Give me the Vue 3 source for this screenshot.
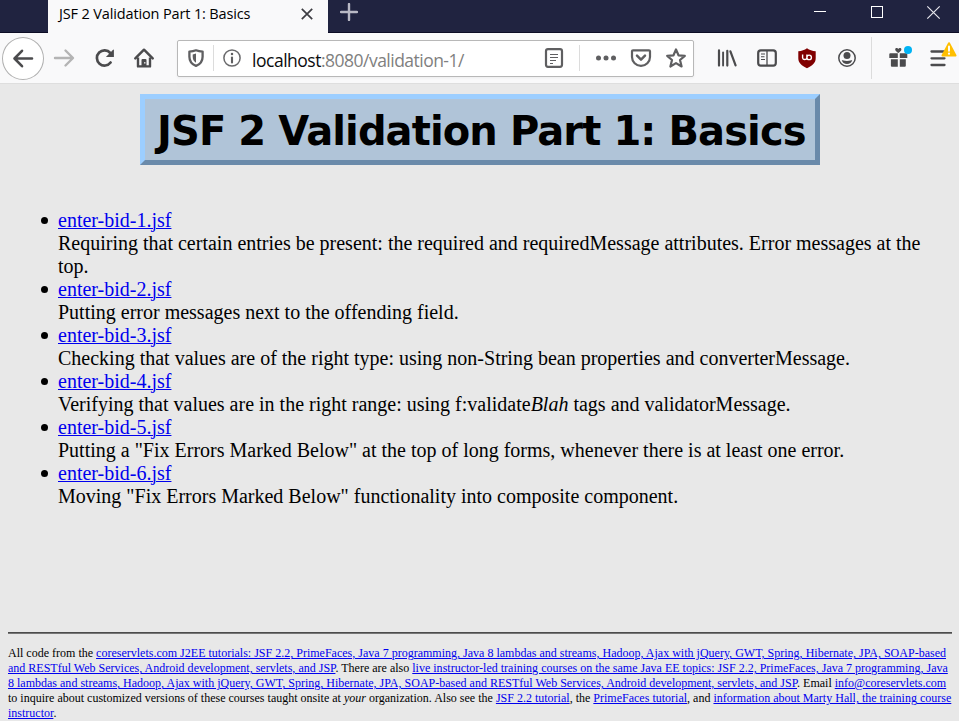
<script setup>
const lessons = [
  { file: 'enter-bid-1.jsf', lines: [['Requiring that certain entries be present: the required and requiredMessage attributes. Error messages at the'], ['top.']] },
  { file: 'enter-bid-2.jsf', lines: [['Putting error messages next to the offending field.']] },
  { file: 'enter-bid-3.jsf', lines: [['Checking that values are of the right type: using non-String bean properties and converterMessage.']] },
  { file: 'enter-bid-4.jsf', lines: [['Verifying that values are in the right range: using f:validate', 'Blah', ' tags and validatorMessage.']] },
  { file: 'enter-bid-5.jsf', lines: [['Putting a "Fix Errors Marked Below" at the top of long forms, whenever there is at least one error.']] },
  { file: 'enter-bid-6.jsf', lines: [['Moving "Fix Errors Marked Below" functionality into composite component.']] },
]
</script>

<template>
  <div class="window">
    <header class="tabs">
      <div class="tab">
        <span class="tab-title">JSF 2 Validation Part 1: Basics</span>
        <svg class="tab-close" width="12" height="12" viewBox="0 0 12 12"><path d="M.8.8l10.4 10.4M11.2.8L.8 11.2" stroke="#3d3d42" stroke-width="1.7" /></svg>
      </div>
      <svg class="plus" width="18" height="18" viewBox="0 0 18 18"><path d="M9 1v16M1 9h16" stroke="#b9b9c5" stroke-width="2.400" stroke-linecap="round" /></svg>
      <svg class="controls" width="128" height="16" viewBox="0 0 128 16" fill="none" stroke="#fff">
        <path d="M0 7.5h12" />
        <rect x="57.500" y="2.500" width="11" height="11" />
        <path d="M113.300 2.300l12.400 12.400M125.700 2.300l-12.400 12.400" stroke-width="1.200" stroke="#e6e6ec" />
      </svg>
    </header>

    <nav class="toolbar">
      <div class="back">
        <svg width="24" height="24" viewBox="0 0 24 24" fill="none" stroke="#4b4b4d" stroke-width="2.600" stroke-linecap="round" stroke-linejoin="round"><path d="M21 12.500H4M11 4.800L3.500 12.500l7.500 7.700" /></svg>
      </div>
      <svg class="icon forward" viewBox="0 0 24 24" fill="none" stroke="#b4b4b4" stroke-width="2.400" stroke-linecap="round" stroke-linejoin="round"><path d="M3 12h17M13.500 4.500L21 12l-7.500 7.500" /></svg>
      <svg class="icon reload" viewBox="0 0 24 24" fill="none" stroke="#4b4b4d"><path d="M17.600 16.500A7.600 7.600 0 1 1 17.300 7" stroke-width="2.700" stroke-linecap="round" /><path d="M20.900 3.400v7.700h-8l3-3 1.600-1.500 2.300-2.600z" fill="#4b4b4d" stroke="none" /></svg>
      <svg class="icon home" viewBox="0 0 24 24"><path d="M3.300 12.300L12 3.700l8.700 8.600" fill="none" stroke="#4b4b4d" stroke-width="2.500" stroke-linecap="round" stroke-linejoin="round" /><path d="M6 11.500v8.900h12v-8.900" fill="none" stroke="#4b4b4d" stroke-width="2.400" stroke-linejoin="round" /><path d="M9.500 21v-7a1 1 0 0 1 1-1h3a1 1 0 0 1 1 1v7z" fill="#4b4b4d" /><rect x="12.200" y="16" width="1.200" height="1.600" fill="#eee" /></svg>

      <div class="address">
        <svg class="icon shield" viewBox="0 0 24 24"><path d="M12 4.300c2.300.9 4.300 1.200 6.600 1.300v5.100c0 4.500-2.100 7.400-6.600 9.200-4.500-1.800-6.600-4.700-6.600-9.200V5.600c2.300-.1 4.300-.4 6.600-1.300z" fill="none" stroke="#5f5f61" stroke-width="2.300" stroke-linejoin="round" /><path d="M12 7.500v9.300c-2.300-1.300-3.300-3.200-3.300-6.200V8.400c1.200-.1 2.100-.4 3.300-.9z" fill="#5f5f61" /></svg>
        <i class="rule"></i>
        <svg class="icon info" viewBox="0 0 24 24"><circle cx="12" cy="12" r="8.100" fill="none" stroke="#6a6a6c" stroke-width="1.500" /><circle cx="12" cy="8" r="1.250" fill="#5f5f61" /><path d="M12 11.500v5" stroke="#5f5f61" stroke-width="2.100" stroke-linecap="round" /></svg>
        <span class="url"><b>localhost</b>:8080/validation-1/</span>
        <svg class="icon reader" viewBox="0 0 24 24" fill="none" stroke="#5f5f61"><rect x="4" y="3.200" width="16" height="17.600" rx="2" stroke-width="2.200" /><path d="M8 8.500h8M8 11.500h8M8 14.500h6M8 17.500h3" stroke-width="1.100" /></svg>
        <i class="rule second"></i>
        <svg class="icon dots" viewBox="0 0 24 24" fill="#5f5f61"><circle cx="4.500" cy="12" r="2.500" /><circle cx="12" cy="12" r="2.500" /><circle cx="19.500" cy="12" r="2.500" /></svg>
        <svg class="icon pocket" viewBox="0 0 24 24" fill="none" stroke="#5f5f61" stroke-width="2.200" stroke-linecap="round" stroke-linejoin="round"><path d="M4 4.300h16a1 1 0 0 1 1 1v5.600a9 8.900 0 0 1-18 0V5.300a1 1 0 0 1 1-1z" /><path d="M8 9.700l4 4 4-4" stroke-width="2.500" /></svg>
        <svg class="icon star" viewBox="0 0 24 24" fill="none" stroke="#5f5f61" stroke-width="2.200" stroke-linejoin="round"><path d="M12 3.400l2.500 5.900 6.300.5-4.800 4.200 1.600 6.500-5.600-3.400-5.600 3.400L8 14 3.200 9.800l6.300-.5z" /></svg>
      </div>

      <svg class="icon library" viewBox="0 0 24 24" fill="none" stroke="#4b4b4d" stroke-linecap="round"><path d="M4 4.400v15.200M12.300 4.800v14.800" stroke-width="2.200" /><path d="M8.100 6.500v13" stroke-width="1.900" /><path d="M15.400 5.400l5.200 14" stroke-width="2.200" /></svg>
      <svg class="icon sidebar" viewBox="0 0 24 24" fill="none" stroke="#4b4b4d"><rect x="3.200" y="4.300" width="17.600" height="15.400" rx="2.600" stroke-width="2.200" /><path d="M12 5v14" stroke-width="1.300" /><path d="M6 8h4M6 10.800h3.500M6 13.500h4" stroke-width="1.100" /></svg>
      <svg class="icon ublock" viewBox="0 0 24 24"><path d="M12 2.200c2.500 2 5.300 2.600 8.700 3v7c0 4.600-3.400 7.600-8.700 10-5.300-2.400-8.700-5.400-8.700-10v-7c3.400-.4 6.200-1 8.700-3z" fill="#800000" /><path d="M7.600 8.600v3.200a2.200 2.200 0 0 0 4.300 0V8.600M11.900 11.400a2.250 2.250 0 1 0 4.500 0a2.250 2.250 0 1 0-4.500 0" fill="none" stroke="#fff" stroke-width="1.400" /></svg>
      <svg class="icon account" viewBox="0 0 24 24"><circle cx="12" cy="12" r="8.200" fill="none" stroke="#4b4b4d" stroke-width="1.500" /><circle cx="12" cy="9.400" r="3.500" fill="#4b4b4d" /><path d="M6.800 14.200c1.100 0 2 .7 5.200.7s4.100-.7 5.200-.7c-.6 2.300-2.500 3.700-5.200 3.700s-4.600-1.400-5.200-3.700z" fill="#4b4b4d" /></svg>
      <i class="rule tall"></i>
      <div class="badged gift">
        <svg class="icon" viewBox="0 0 24 24" fill="#4b4b4d"><path d="M3.300 7.300H10.800v4.600H2.300V8.300a1 1 0 0 1 1-1zM12.800 7.300h6.500a1 1 0 0 1 1 1v3.600h-7.500zM3.900 13.300h6.900v7.400H4.900a1 1 0 0 1-1-1zM12.800 13.300h6v6.400a1 1 0 0 1-1 1h-5z" /><path d="M11.300 7C9.800 6 8.200 4.700 8.200 3.500c0-1.600 2.400-1.900 3.100-.5.700-1.400 3.100-1.100 3.100.5 0 1.200-1.600 2.500-3.100 3.500z" /></svg>
        <i class="dot"></i>
      </div>
      <div class="badged menu">
        <svg class="icon" viewBox="0 0 24 24" fill="none" stroke="#4b4b4d" stroke-width="2.300" stroke-linecap="round"><path d="M5.500 5.500h13M5.500 12.300h13M5.500 19h13" /></svg>
        <svg class="warning" width="16" height="15" viewBox="0 0 16 15"><path d="M8 1.200l6.500 12.300h-13z" fill="#ffbf00" stroke="#ffbf00" stroke-width="2" stroke-linejoin="round" /><path d="M8 4.500v4.300" stroke="#fff" stroke-width="1.900" stroke-linecap="round" /><circle cx="8" cy="11.700" r="1.100" fill="#fff" /></svg>
      </div>
    </nav>

    <main>
      <h1>JSF 2 Validation Part 1: Basics</h1>
      <ul>
        <li v-for="lesson in lessons" :key="lesson.file">
          <a href="#">{{ lesson.file }}</a>
          <div v-for="(line, n) in lesson.lines" :key="n" class="line">{{ line[0] }}<em v-if="line[1]">{{ line[1] }}</em>{{ line[2] }}</div>
        </li>
      </ul>
      <hr>
      <footer>
        <div>All code from the <a href="#">coreservlets.com J2EE tutorials: JSF 2.2, PrimeFaces, Java 7 programming, Java 8 lambdas and streams, Hadoop, Ajax with jQuery, GWT, Spring, Hibernate, JPA, SOAP-based</a></div>
        <div><a href="#">and RESTful Web Services, Android development, servlets, and JSP</a>. There are also <a href="#">live instructor-led training courses on the same Java EE topics: JSF 2.2, PrimeFaces, Java 7 programming, Java</a></div>
        <div><a href="#">8 lambdas and streams, Hadoop, Ajax with jQuery, GWT, Spring, Hibernate, JPA, SOAP-based and RESTful Web Services, Android development, servlets, and JSP</a>. Email <a href="#">info@coreservlets.com</a></div>
        <div>to inquire about customized versions of these courses taught onsite at <em>your</em> organization. Also see the <a href="#">JSF 2.2 tutorial</a>, the <a href="#">PrimeFaces tutorial</a>, and <a href="#">information about Marty Hall, the training course</a></div>
        <div><a href="#">instructor</a>.</div>
      </footer>
    </main>
  </div>
</template>

<style>
body { margin: 0; overflow: hidden; }
</style>

<style scoped>
* { box-sizing: border-box; }
.window { width: 959px; height: 721px; overflow: hidden; background: #e8e8e8; color: #000; font-family: "Liberation Serif", serif; }
svg { display: block; flex: none; }
.tabs { display: flex; height: 33px; padding-left: 48px; background: #202340; box-shadow: inset 0 -1px #0c0c24; }
.tab { display: flex; width: 280px; padding: 0 15px 0 11px; background: #f9f9fa; justify-content: space-between; }
.tab-title { font: 14.500px/28px "Open Sans", sans-serif; letter-spacing: -.140px; white-space: nowrap; }
.tab-close { margin-top: 8px; }
.plus { margin: 3px 0 0 12px; }
.controls { margin: 4px 17px 0 auto; }
.toolbar { display: flex; align-items: center; height: 51px; padding-left: 2px; background: #f9f9fa; border-bottom: 1px solid #dedede; }
.icon { width: 24px; height: 24px; flex: none; }
.back { display: flex; width: 42px; height: 43px; flex: none; align-items: center; justify-content: center; border: 1px solid #b0b0b0; border-radius: 50%; background: #fff; }
.forward { margin-left: 8px; }
.reload { margin-left: 17px; }
.home { margin-left: 15px; }
.address { display: flex; align-items: center; width: 517px; height: 37px; margin-left: 21px; padding: 0 5px 0 6px; border: 1px solid #b8b8b8; border-radius: 2px; background: #fff; box-shadow: 0 1px 3px #0000000d; }
.rule { width: 1px; height: 26px; margin-left: 5px; background: #dcdcdc; flex: none; }
.rule.second { margin-left: 13px; }
.rule.tall { height: 42px; margin-left: 12px; }
.info { margin-left: 6px; }
.url { flex: 1; margin-left: 8px; padding-top: 3px; font: 17.500px/24px "Open Sans", sans-serif; letter-spacing: -.520px; color: #808080; white-space: nowrap; }
.url b { font-weight: 400; color: #0c0c0d; letter-spacing: -.480px; }
.dots { margin-left: 14px; }
.pocket, .star { margin-left: 11px; }
.library { margin-left: 21px; }
.sidebar, .ublock, .account { margin-left: 16px; }
.badged { position: relative; flex: none; margin-left: 15px; }
.dot { position: absolute; top: 0; right: -1px; width: 8px; height: 8px; border-radius: 50%; background: #00b3f4; }
.warning { position: absolute; top: -4px; left: 15px; }
main { display: flex; flex-direction: column; padding: 10px 7px 0 8px; }
h1 { align-self: center; width: 680px; height: 71px; margin: 0; padding: 2px 0 0 12px; border: 5px solid; border-color: #9cceff #6a8aaa #6a8aaa #9cceff; background: #b0c4d8; font: bold 40px/61px "DejaVu Sans", sans-serif; letter-spacing: -.900px; white-space: nowrap; }
ul { height: 467px; margin: 0; padding: 44px 0 0 50px; font-size: 20px; line-height: 23px; list-style: none; }
li { position: relative; }
li::before { content: ""; position: absolute; top: 7.500px; left: -17.250px; width: 7.500px; height: 7.500px; border-radius: 50%; background: #000; }
.line { white-space: nowrap; }
a { color: #00e; text-decoration: underline; text-decoration-thickness: 1px; }
hr { width: 944px; height: 2px; margin: 0; border: 0; border-top: 1px solid #4c4c4c; background: #777; }
footer { padding-top: 12px; font-size: 12px; line-height: 15px; letter-spacing: .005px; white-space: nowrap; }
</style>
